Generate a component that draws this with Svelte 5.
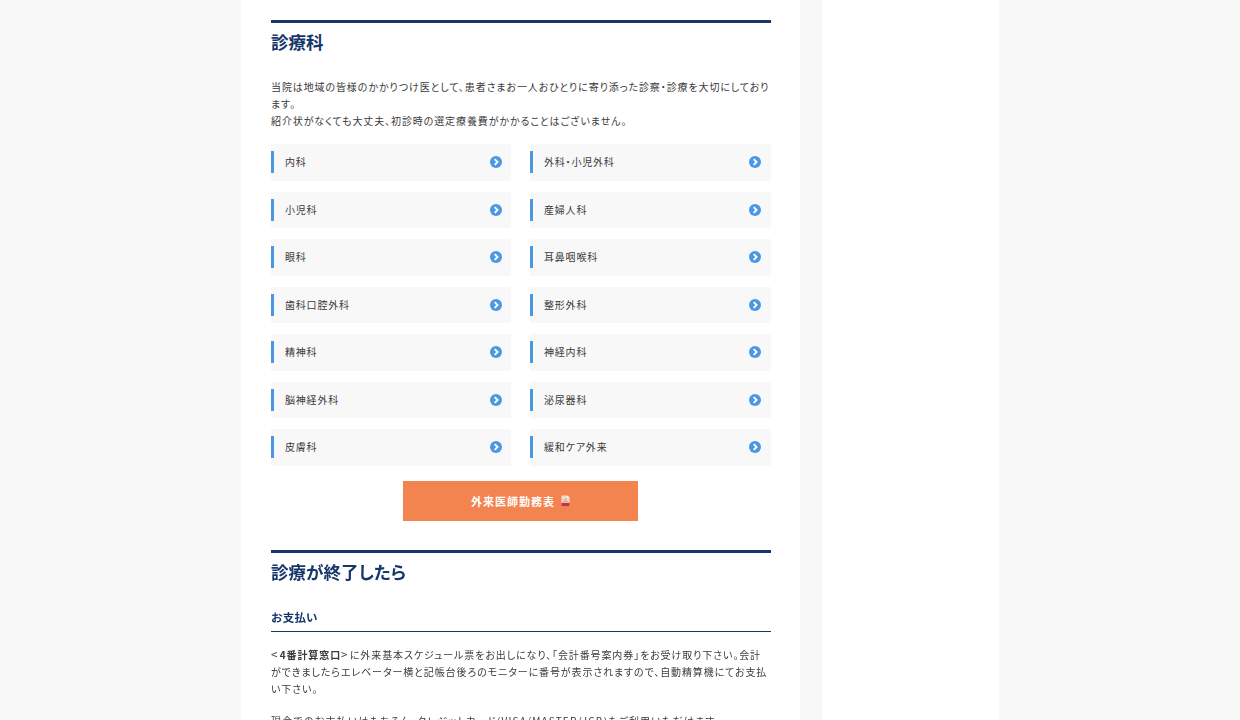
<script>
  const departments = [
    "内科", "外科・小児外科",
    "小児科", "産婦人科",
    "眼科", "耳鼻咽喉科",
    "歯科口腔外科", "整形外科",
    "精神科", "神経内科",
    "脳神経外科", "泌尿器科",
    "皮膚科", "緩和ケア外来"
  ];
</script>

<div class="page">
  <div class="columns">
    <main class="main">
      <h2 class="title">診療科</h2>
      <p class="text intro">
        当院は地域の皆様のかかりつけ医として、患者さまお一人おひとりに寄り添った診察・診療を大切にしております。<br />
        紹介状がなくても大丈夫、初診時の選定療養費がかかることはございません。
      </p>

      <ul class="dept-grid">
        {#each departments as name}
          <li class="dept">
            <span class="dept-name">{name}</span>
            <svg class="arrow" viewBox="0 0 12 12" width="12" height="12" aria-hidden="true">
              <circle cx="6" cy="6" r="6" fill="#4a98e4" />
              <path d="M4.7 3.1 7.6 6 4.7 8.9" fill="none" stroke="#fff" stroke-width="1.9" />
            </svg>
          </li>
        {/each}
      </ul>

      <a class="schedule" href="#schedule">
        外来医師勤務表
        <svg viewBox="0 0 10 12" width="9" height="12" aria-hidden="true">
          <path d="M0.5 0h6.5l2.5 2.5V12h-9z" fill="#efd9cf" />
          <path d="M7 0l2.5 2.5H7z" fill="#fff" />
          <path d="M3 6.5 5 3.2l2 3.3z" fill="none" stroke="#e0877a" stroke-width="0.8" />
          <rect x="0.5" y="8" width="9" height="4" fill="#c8343f" />
        </svg>
      </a>

      <h2 class="title second">診療が終了したら</h2>
      <h3 class="subtitle">お支払い</h3>
      <p class="text">
        <span class="bracket">&lt;</span><b>4番計算窓口</b><span class="bracket">&gt;</span>に外来基本スケジュール票をお出しになり、「会計番号案内券」をお受け取り下さい。会計ができましたらエレベーター横と記帳台後ろのモニターに番号が表示されますので、自動精算機にてお支払い下さい。
      </p>
      <p class="text cash">
        現金でのお支払いはもちろん、クレジットカード(VISA/MASTER/JCB)もご利用いただけます。
      </p>
    </main>
    <aside class="side"></aside>
  </div>
</div>

<style>
  :global(body) {
    background: #f8f8f8;
    font-family: "Noto Sans CJK JP", "Noto Sans", sans-serif;
    color: #3a3a3a;
  }

  .page {
    height: 720px;
    overflow: hidden;
  }

  .columns {
    display: flex;
    gap: 22px;
    width: 758px;
    height: 100%;
    margin: 0 auto;
  }

  .main {
    width: 500px;
    padding: 20px 29px 0 30px;
    background: #fff;
    filter: blur(0.35px);
  }

  .side {
    width: 177px;
    background: #fff;
  }

  .title {
    margin: 0;
    padding-top: 5.5px;
    border-top: 3px solid #17376b;
    color: #17376b;
    font-size: 17.5px;
    font-weight: 700;
    line-height: 26px;
    font-feature-settings: "palt";
  }

  .text {
    margin: 0;
    font-size: 10px;
    line-height: 17px;
    letter-spacing: 0.89px;
    font-feature-settings: "palt";
  }

  .bracket {
    font-size: 11.5px;
    letter-spacing: 2.4px;
  }

  .intro {
    margin-top: 23.5px;
  }

  .dept-grid {
    display: grid;
    grid-template-columns: 240.4px 241px;
    column-gap: 18.6px;
    row-gap: 11px;
    margin: 15px 0 0;
    padding: 0;
    list-style: none;
  }

  .dept {
    display: flex;
    align-items: center;
    justify-content: space-between;
    height: 36.5px;
    padding-right: 10px;
    background: #f8f8f8;
  }

  .dept:nth-child(odd) {
    padding-right: 9.4px;
  }

  .dept-name {
    padding-left: 11px;
    border-left: 3px solid #4a98e4;
    font-size: 10px;
    line-height: 22px;
    letter-spacing: 0.8px;
    font-feature-settings: "palt";
  }

  .schedule {
    display: flex;
    align-items: center;
    justify-content: center;
    gap: 6px;
    width: 235px;
    height: 40px;
    margin: 15px 0 0 132px;
    background: #f3834f;
    color: #fff;
    font-size: 11px;
    font-weight: 700;
    letter-spacing: 1px;
    text-decoration: none;
  }

  .second {
    margin-top: 29px;
    padding-top: 6px;
  }

  .subtitle {
    margin: 22px 0 0;
    padding-bottom: 4px;
    border-bottom: 1.5px solid #17376b;
    color: #17376b;
    font-size: 11.5px;
    font-weight: 700;
    line-height: 20px;
    letter-spacing: 0.2px;
  }

  .subtitle + .text {
    margin-top: 14px;
  }

  .cash {
    margin-top: 15px;
    letter-spacing: 1.2px;
  }
</style>
